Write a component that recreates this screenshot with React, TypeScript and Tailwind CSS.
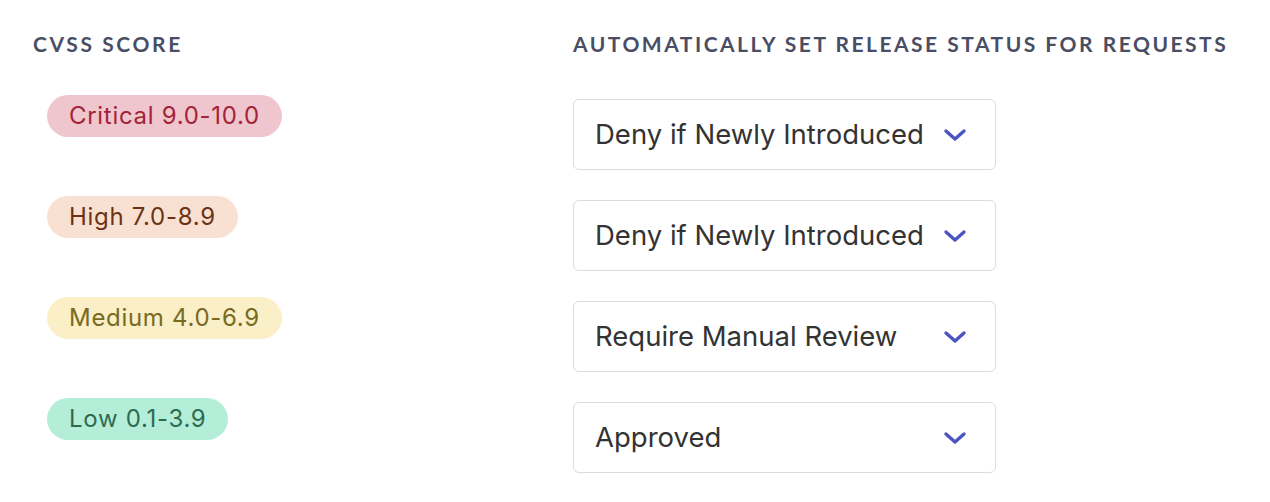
import React from 'react';

type Rule = {
  label: string;
  badge: string;
  action: string;
};

const rules: Rule[] = [
  { label: 'Critical 9.0-10.0', badge: 'bg-[#f0c6ce] text-[#a32338]', action: 'Deny if Newly Introduced' },
  { label: 'High 7.0-8.9', badge: 'bg-[#f8e1d3] text-[#6b3314]', action: 'Deny if Newly Introduced' },
  { label: 'Medium 4.0-6.9', badge: 'bg-[#faefc7] text-[#786a1f]', action: 'Require Manual Review' },
  { label: 'Low 0.1-3.9', badge: 'bg-[#b4eed9] text-[#2f6a50]', action: 'Approved' },
];

const Chevron: React.FC = () => (
  <svg width="24" height="14" viewBox="0 0 24 14" fill="none" className="shrink-0">
    <path d="M3 3 L12 11 L21 3" stroke="#4b55c2" strokeWidth="3.4" strokeLinecap="round" strokeLinejoin="round" />
  </svg>
);

const App: React.FC = () => {
  return (
    <div className="w-[1270px] h-[502px] bg-white pl-[33px] pt-[32px]">
      <div className="flex">
        <div className="w-[540px]">
          <h2 className="font-['Lato',sans-serif] font-bold text-[21px] leading-6 tracking-[2.6px] text-[#494e64]">CVSS SCORE</h2>
        </div>
        <div>
          <h2 className="font-['Lato',sans-serif] font-bold text-[21px] leading-6 tracking-[2.5px] text-[#494e64]">AUTOMATICALLY SET RELEASE STATUS FOR REQUESTS</h2>
        </div>
      </div>

      <div className="mt-[39px] flex flex-col gap-[30px]">
        {rules.map((rule) => (
          <div key={rule.label} className="flex items-start h-[71px]">
            <div className="w-[540px] pl-[14px]">
              <span className={`inline-flex items-center h-[42px] px-[22px] rounded-full font-['Inter',sans-serif] text-[24px] tracking-[0.7px] ${rule.badge}`}>
                {rule.label}
              </span>
            </div>
            <div className="mt-[4px] w-[423px] h-[71px] border border-[#dcdcdc] rounded-[6px] flex items-center justify-between pl-[21px] pr-[28px]">
              <span className="font-['Inter',sans-serif] text-[27.5px] text-[#333333]">{rule.action}</span>
              <Chevron />
            </div>
          </div>
        ))}
      </div>
    </div>
  );
};

export default App;
